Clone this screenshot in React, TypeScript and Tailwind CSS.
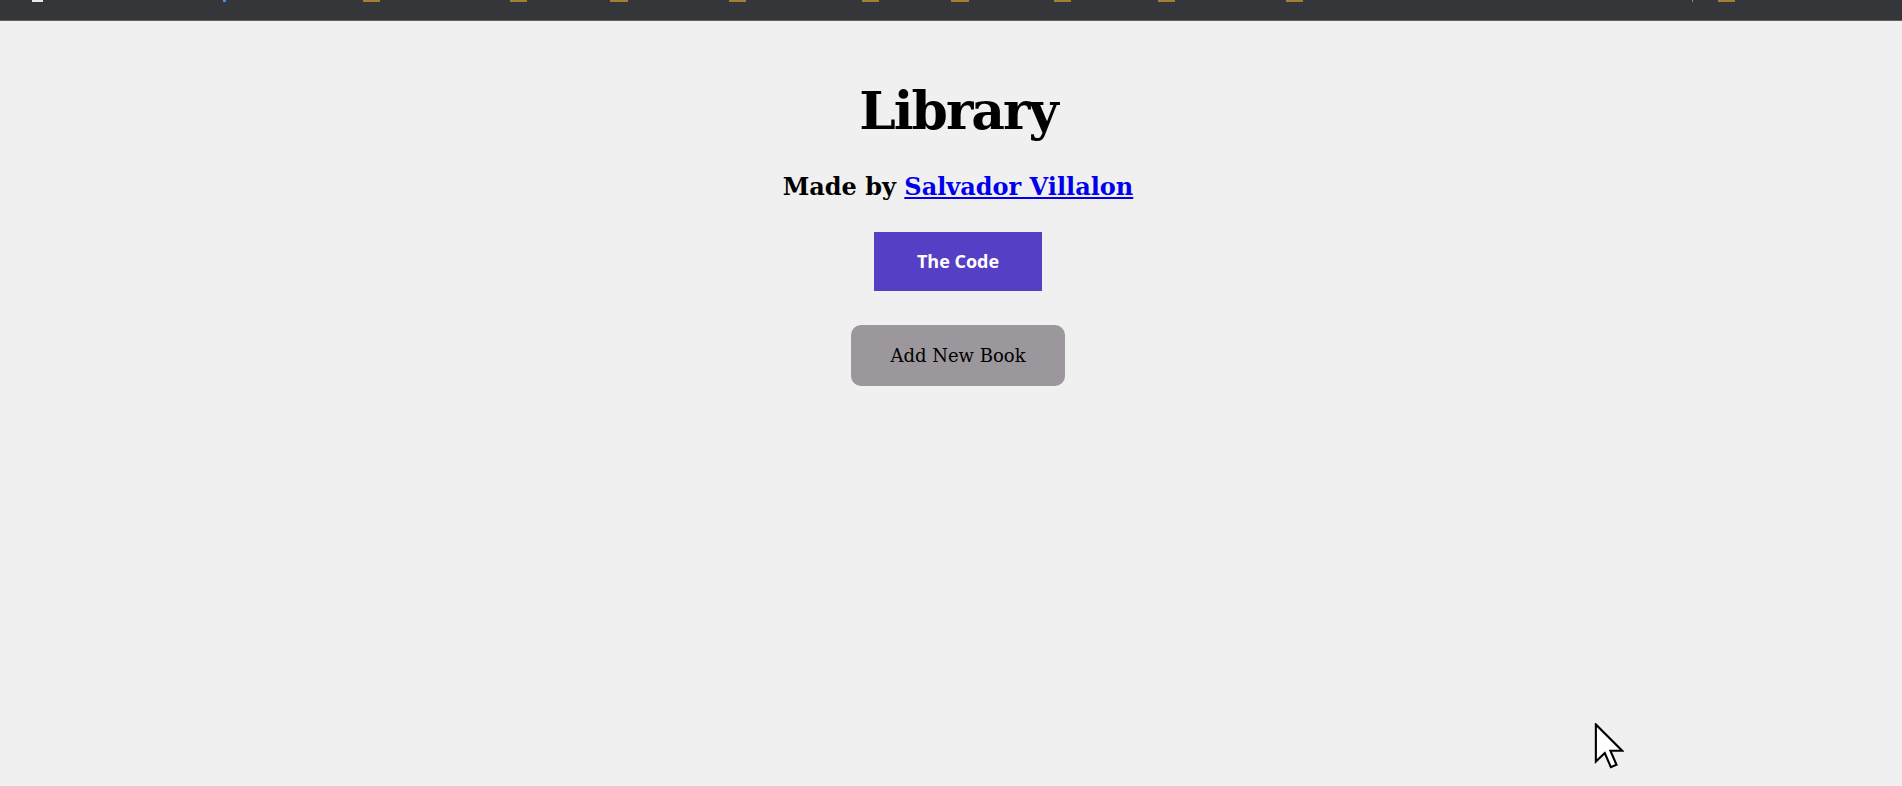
import React from "react";

const marks = [
  { left: 32, w: 11, color: "bg-[#e8e8e8]" },
  { left: 223, w: 3, color: "bg-[#4a8af4]" },
  { left: 363, w: 17, color: "bg-[#a37f33]" },
  { left: 510, w: 17, color: "bg-[#a37f33]" },
  { left: 610, w: 18, color: "bg-[#a37f33]" },
  { left: 729, w: 17, color: "bg-[#a37f33]" },
  { left: 862, w: 17, color: "bg-[#a37f33]" },
  { left: 951, w: 18, color: "bg-[#a37f33]" },
  { left: 1054, w: 17, color: "bg-[#a37f33]" },
  { left: 1158, w: 17, color: "bg-[#a37f33]" },
  { left: 1286, w: 17, color: "bg-[#a37f33]" },
  { left: 1692, w: 1, color: "bg-[#8a8b8e]" },
  { left: 1718, w: 17, color: "bg-[#a37f33]" },
];

const Cursor = () => (
  <svg
    className="absolute left-[1594px] top-[723px]"
    width="30"
    height="46"
    viewBox="0 0 12.4 19.6"
  >
    <path
      d="M0.6 0.6 L0.6 16.4 L4.4 12.8 L7 18.8 L9.4 17.8 L6.8 11.8 L11.8 11.8 Z"
      fill="#ffffff"
      stroke="#000000"
      strokeWidth="0.9"
      strokeLinejoin="miter"
    />
  </svg>
);

export default function App() {
  return (
    <div className="relative min-h-screen h-[786px] overflow-hidden bg-[#f0f0f0]">
      <div className="relative h-[21px] bg-[#35363a] border-b border-[#606165]">
        {marks.map((m, i) => (
          <span
            key={i}
            className={`absolute top-0 h-[2px] ${m.color}`}
            style={{ left: m.left, width: m.w }}
          />
        ))}
      </div>

      <main
        className="flex flex-col items-center pl-[14px] text-black"
        style={{ fontFamily: '"DejaVu Serif", "Liberation Serif", serif' }}
      >
        <h1 className="mt-[56px] text-[52px] leading-[68px] font-bold tracking-[-2px]">
          Library
        </h1>
        <h2 className="mt-[26px] text-[24px] leading-[32px] font-bold">
          Made by{" "}
          <a href="#" className="text-[#0000ee] underline">
            Salvador Villalon
          </a>
        </h2>
        <button
          className="mt-[29px] w-[168px] h-[59px] bg-[#5540c5] text-white text-[18px] font-bold"
          style={{ fontFamily: '"Open Sans", "Liberation Sans", sans-serif' }}
        >
          The Code
        </button>
        <button className="mt-[34px] w-[214px] h-[61px] rounded-[10px] bg-[#9c979c] text-[18px] text-black">
          Add New Book
        </button>
      </main>

      <Cursor />
    </div>
  );
}
